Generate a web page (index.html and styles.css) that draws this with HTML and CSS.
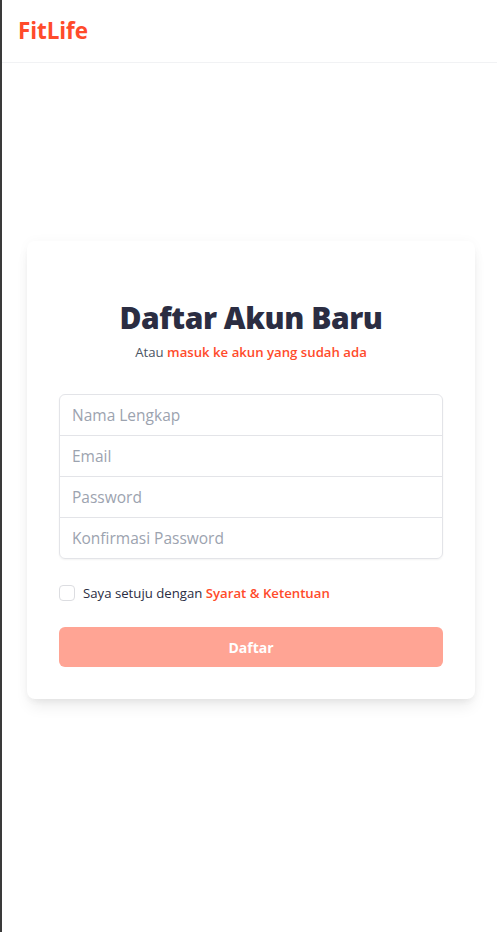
FILE: index.html
```html
<!DOCTYPE html>
<html lang="id">
<head>
<meta charset="utf-8">
<title>FitLife - Daftar</title>
<link rel="stylesheet" href="styles.css">
</head>
<body>
<header class="topbar">
  <a class="brand" href="#">FitLife</a>
</header>
<main class="main">
  <section class="card">
    <h1 class="title">Daftar Akun Baru</h1>
    <p class="subtitle">Atau <a href="#" class="link">masuk ke akun yang sudah ada</a></p>
    <form class="form">
      <div class="fields">
        <input class="field" type="text" placeholder="Nama Lengkap">
        <input class="field" type="email" placeholder="Email">
        <input class="field" type="password" placeholder="Password">
        <input class="field" type="password" placeholder="Konfirmasi Password">
      </div>
      <label class="agree">
        <input type="checkbox" class="check">
        <span>Saya setuju dengan <a href="#" class="link">Syarat &amp; Ketentuan</a></span>
      </label>
      <button type="submit" class="submit" disabled>Daftar</button>
    </form>
  </section>
</main>
</body>
</html>
```
FILE: styles.css
```css
* { box-sizing: border-box; }
html, body { margin: 0; padding: 0; }
body {
  font-family: "Open Sans", "Noto Sans", sans-serif;
  background: #ffffff;
  color: #2b2d42;
  min-height: 100vh;
  border-left: 2px solid #3a3a3a;
}
.topbar {
  height: 63px;
  border-bottom: 1px solid #f1f2f4;
  display: flex;
  align-items: center;
  padding-left: 16px;
  padding-bottom: 1px;
}
.brand {
  color: #ff4b2b;
  font-weight: 700;
  font-size: 22.5px;
  text-decoration: none;
  letter-spacing: -0.1px;
}
.main {
  padding: 178px 22px 0 25px;
}
.card {
  background: #fff;
  border-radius: 8px;
  padding: 32px;
  box-shadow: 0 10px 15px -3px rgba(0,0,0,0.08), 0 4px 6px -2px rgba(0,0,0,0.04), 0 0 12px rgba(0,0,0,0.03);
}
.title {
  margin: 27px 0 0;
  text-align: center;
  font-size: 30px;
  line-height: 36px;
  font-weight: 800;
  color: #2b2d42;
  letter-spacing: -0.45px;
}
.subtitle {
  margin: 6px 0 0;
  text-align: center;
  font-size: 13.2px;
  line-height: 20px;
  color: #4b5563;
}
.link {
  color: #ff4b2b;
  font-weight: 600;
  text-decoration: none;
}
.form {
  margin-top: 32px;
  display: flex;
  flex-direction: column;
  gap: 24px;
}
.fields {
  display: flex;
  flex-direction: column;
  border-radius: 6px;
  box-shadow: 0 1px 2px rgba(0,0,0,0.05);
}
.field {
  display: block;
  width: 100%;
  font-family: inherit;
  font-size: 15.5px;
  line-height: 24px;
  padding: 8px 12px;
  border: 1px solid #e3e4e8;
  margin-top: -1px;
  color: #2b2d42;
  background: #fff;
  outline: none;
}
.field:first-child { margin-top: 0; border-radius: 6px 6px 0 0; }
.field:last-child { border-radius: 0 0 6px 6px; }
.field::placeholder { color: #9ca3af; }
.agree {
  display: flex;
  align-items: center;
  gap: 8px;
  font-size: 13.2px;
  line-height: 20px;
  color: #2b2d42;
}
.check {
  appearance: none;
  -webkit-appearance: none;
  margin: 0;
  width: 16px;
  height: 16px;
  border: 1px solid #dcdde1;
  border-radius: 4px;
  background: #fff;
}
.submit {
  height: 40px;
  border: none;
  border-radius: 6px;
  background: #ff4b2b;
  opacity: 0.5;
  color: #fff;
  font-family: inherit;
  font-size: 14px;
  font-weight: 700;
}
```
